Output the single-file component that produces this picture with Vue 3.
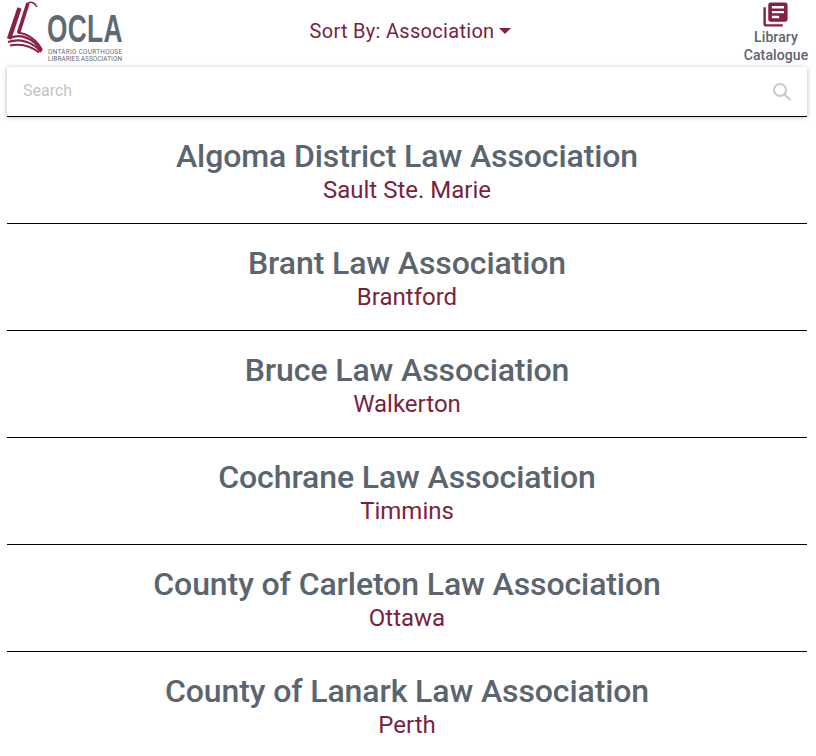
<script setup>
const associations = [
  { name: 'Algoma District Law Association', city: 'Sault Ste. Marie' },
  { name: 'Brant Law Association', city: 'Brantford' },
  { name: 'Bruce Law Association', city: 'Walkerton' },
  { name: 'Cochrane Law Association', city: 'Timmins' },
  { name: 'County of Carleton Law Association', city: 'Ottawa' },
  { name: 'County of Lanark Law Association', city: 'Perth' },
]
</script>

<template>
  <div class="page">
    <header class="top-bar">
      <div class="logo">
        <svg class="logo-mark" width="40" height="54" viewBox="7 1 40 54" fill="none" stroke="#8a2342">
          <path d="M19.5 8L9 39" stroke-width="4.4" />
          <path d="M28 3L18.5 33" stroke-width="3.6" />
          <path d="M28 3C31 1 35 3 37 7" stroke-width="1.5" />
          <path d="M18 33C27 33 37 40 42 50" stroke-width="2" />
          <path d="M10 38C21 33 35 39 41.5 51" stroke-width="2.2" />
          <path d="M8 42C20 38 33 42 41 52" stroke-width="2.2" />
          <path d="M10 45.5C20 43.5 31 46 39 52.5" stroke-width="2" />
        </svg>
        <div class="logo-text">
          <div class="logo-word">OCLA</div>
          <div class="logo-sub logo-sub-top">ONTARIO COURTHOUSE</div>
          <div class="logo-sub">LIBRARIES ASSOCIATION</div>
        </div>
      </div>
      <button type="button" class="sort-button">
        Sort By: Association
        <span class="caret"></span>
      </button>
      <a class="catalogue-link">
        <svg class="book-icon" width="29" height="29" viewBox="0 0 24 24" fill="#842040">
          <path d="M4 6H2v14c0 1.1.9 2 2 2h14v-2H4V6zm16-4H8c-1.1 0-2 .9-2 2v12c0 1.1.9 2 2 2h12c1.1 0 2-.9 2-2V4c0-1.1-.9-2-2-2zm-1 9H9V9h10v2zm-4 4H9v-2h6v2zm4-8H9V5h10v2z" />
        </svg>
        <span>Library Catalogue</span>
      </a>
    </header>

    <div class="search-box">
      <input class="search-input" type="text" placeholder="Search" />
      <svg width="20" height="20" viewBox="0 0 20 20" fill="none" stroke="#c9c9c9" stroke-width="2" stroke-linecap="round">
        <circle cx="8" cy="8" r="6" />
        <path d="M12.5 12.5L18 17.5" />
      </svg>
    </div>

    <ul class="assoc-list">
      <li v-for="item in associations" :key="item.name" class="assoc-row">
        <div class="assoc-name">{{ item.name }}</div>
        <div class="assoc-city">{{ item.city }}</div>
      </li>
    </ul>
  </div>
</template>

<style>
html,
body {
  margin: 0;
  height: 756px;
  overflow: hidden;
  background: #fff;
}
</style>

<style scoped>
.page {
  box-sizing: border-box;
  width: 816px;
  height: 756px;
  padding: 0 9px 0 7px;
  overflow: hidden;
  font-family: Roboto, "Liberation Sans", sans-serif;
}

.top-bar {
  display: grid;
  grid-template-columns: 1fr auto 1fr;
  align-items: start;
  height: 67px;
}

.logo {
  display: flex;
  align-items: flex-start;
}

.logo-mark {
  flex: none;
  margin-top: 1px;
}

.logo-text {
  margin: 13px 0 0 1px;
  color: #5f6a74;
}

.logo-word {
  height: 36px;
  margin-left: -1px;
  font-family: "Liberation Sans", sans-serif;
  font-size: 38px;
  font-weight: 700;
  line-height: 33px;
  letter-spacing: 0.5px;
  transform: scaleX(0.69);
  transform-origin: left center;
}

.logo-sub {
  font-size: 6.4px;
  font-weight: 400;
  line-height: 7px;
  letter-spacing: 0.08px;
  white-space: nowrap;
}

.logo-sub-top {
  letter-spacing: 0.3px;
}

.sort-button {
  display: flex;
  align-items: center;
  gap: 5px;
  margin: 19px 0 0 7px;
  padding: 0;
  border: 0;
  background: transparent;
  color: #7a1f3d;
  font: 400 20px/24px Roboto, sans-serif;
  letter-spacing: 0.3px;
}

.caret {
  width: 0;
  height: 0;
  border-top: 6px solid #842040;
  border-left: 6px solid transparent;
  border-right: 6px solid transparent;
}

.catalogue-link {
  display: flex;
  flex-direction: column;
  align-items: center;
  justify-self: end;
  width: 66px;
  margin-right: -2px;
  color: #5a6570;
  font-size: 14px;
  font-weight: 500;
  line-height: 18px;
  letter-spacing: 0.1px;
  text-align: center;
}

.book-icon {
  display: block;
  margin: 0 0 -1px -1px;
}

.search-box {
  display: flex;
  align-items: center;
  height: 49px;
  padding: 0 15px 0 16px;
  border-radius: 2px;
  background: #fff;
  box-shadow: 0 1px 5px rgba(0, 0, 0, 0.3);
}

.search-input {
  flex: 1;
  min-width: 0;
  padding: 0 0 2px;
  border: 0;
  outline: 0;
  font: 400 16px Roboto, sans-serif;
}

.search-input::placeholder {
  color: #c4c4c4;
}

.assoc-list {
  margin: 0;
  padding: 0;
  list-style: none;
}

.assoc-row {
  box-sizing: border-box;
  height: 107px;
  padding-top: 20px;
  border-top: 1px solid #000;
  text-align: center;
}

.assoc-name {
  color: #5a6570;
  font-size: 32px;
  font-weight: 500;
  line-height: 39px;
  letter-spacing: -0.1px;
}

.assoc-city {
  color: #7a1f3d;
  font-size: 24px;
  line-height: 28px;
}
</style>
